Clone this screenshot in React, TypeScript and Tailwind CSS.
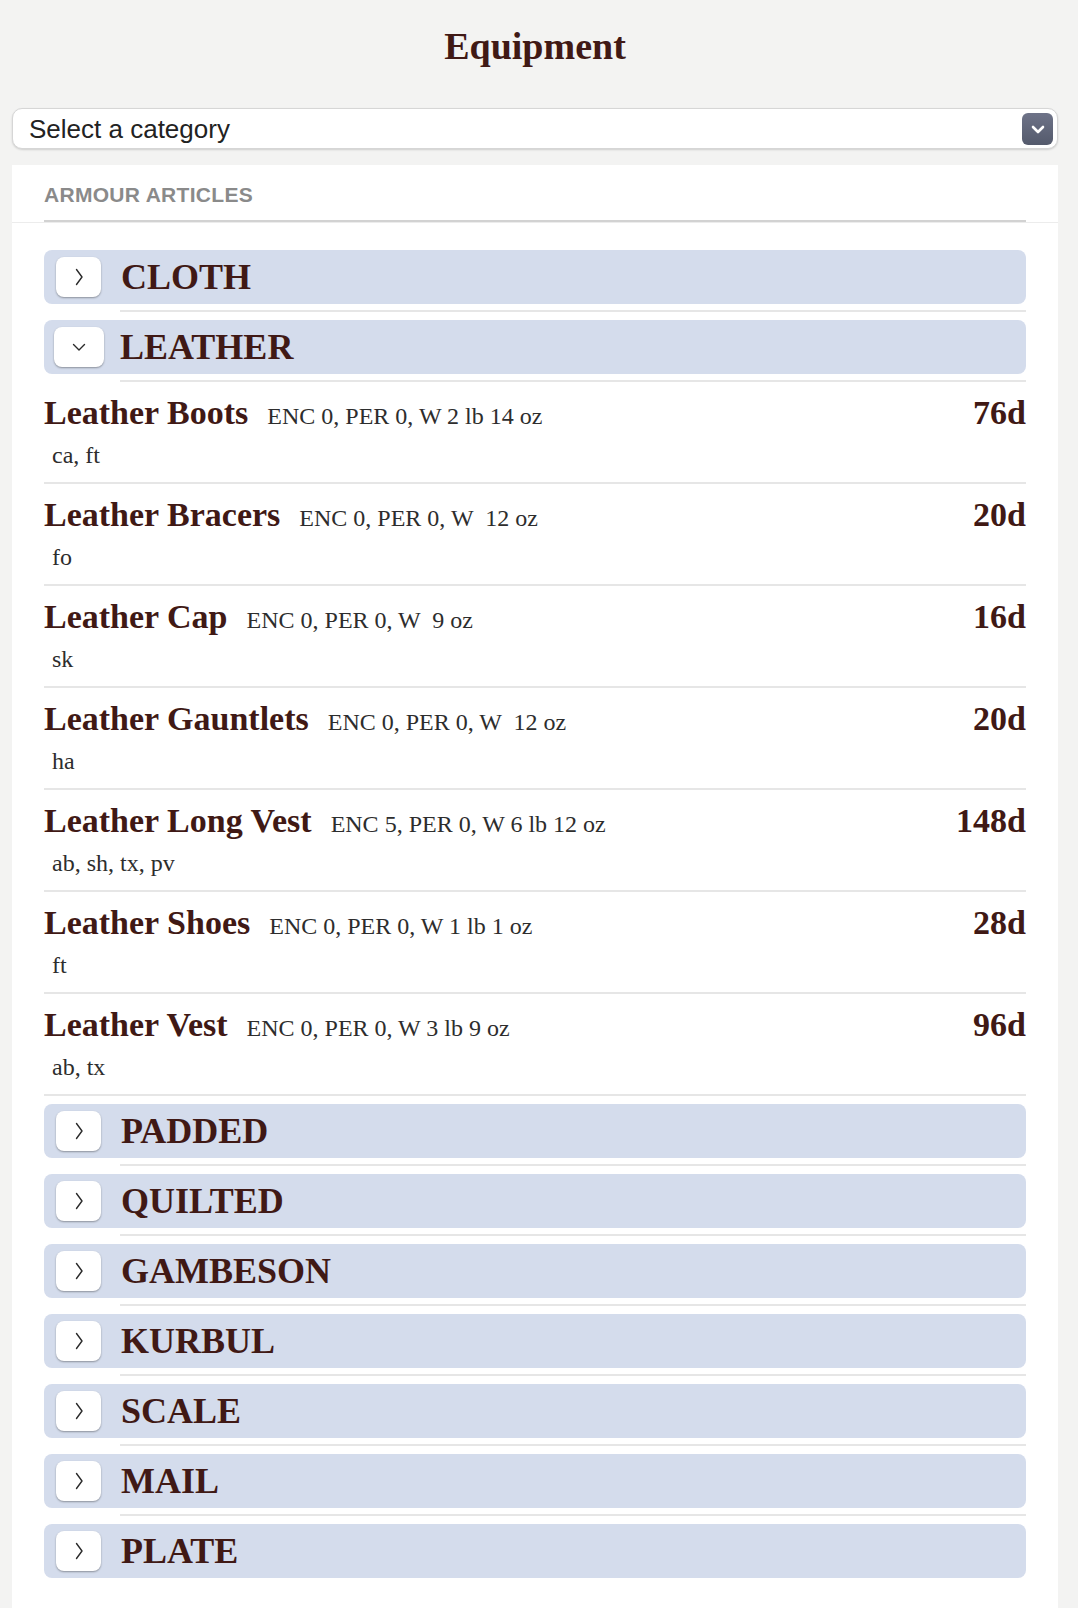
import { useState } from "react"

const serif = { fontFamily: '"Liberation Serif", "Times New Roman", serif' }
const sans = { fontFamily: '"Liberation Sans", Arial, sans-serif' }

const categories = ["CLOTH", "LEATHER", "PADDED", "QUILTED", "GAMBESON", "KURBUL", "SCALE", "MAIL", "PLATE"]

const leather = [
    { name: "Leather Boots", stats: "ENC 0, PER 0, W 2 lb 14 oz", tags: "ca, ft", price: "76d" },
    { name: "Leather Bracers", stats: "ENC 0, PER 0, W  12 oz", tags: "fo", price: "20d" },
    { name: "Leather Cap", stats: "ENC 0, PER 0, W  9 oz", tags: "sk", price: "16d" },
    { name: "Leather Gauntlets", stats: "ENC 0, PER 0, W  12 oz", tags: "ha", price: "20d" },
    { name: "Leather Long Vest", stats: "ENC 5, PER 0, W 6 lb 12 oz", tags: "ab, sh, tx, pv", price: "148d" },
    { name: "Leather Shoes", stats: "ENC 0, PER 0, W 1 lb 1 oz", tags: "ft", price: "28d" },
    { name: "Leather Vest", stats: "ENC 0, PER 0, W 3 lb 9 oz", tags: "ab, tx", price: "96d" },
]

function Chevron({ open }: { open: boolean }) {
    return (
        <svg width="20" height="20" viewBox="0 0 20 20" fill="none" stroke="#2a2a2a" strokeWidth="1.4" strokeLinecap="round" strokeLinejoin="round">
            {open ? <path d="M4.5 7.5l5.5 5.5 5.5-5.5" /> : <path d="M7.5 2.5l5.5 7.5-5.5 7.5" />}
        </svg>
    )
}

function Section({ title, open, last, onToggle }: { title: string; open: boolean; last: boolean; onToggle: () => void }) {
    return (
        <div>
            <div className="flex h-[54px] items-center rounded-[8px] bg-[#d4dcec]">
                <button
                    onClick={onToggle}
                    className={`flex h-10 items-center justify-center rounded-[8px] bg-white shadow-[0_1px_2px_rgba(0,0,0,0.35)] ${open ? "ml-[10px] w-[50px]" : "ml-3 w-[45px]"}`}
                >
                    <Chevron open={open} />
                </button>
                <span className={`${open ? "ml-4" : "ml-5"} text-[36px] font-bold leading-none text-[#401915]`} style={serif}>
                    {title}
                </span>
            </div>
            {!last && <div className={`ml-[76px] mt-[6px] h-[2px] bg-[#e6e6e6] ${open ? "" : "mb-2"}`} />}
            {open && (
                <div className="mb-2">
                    {leather.map((item) => (
                        <div key={item.name} className="border-b-2 border-[#e6e6e6] pt-[11px] pb-[11px]" style={serif}>
                            <div className="flex h-10 items-baseline">
                                <span className="text-[34px] font-bold leading-[40px] text-[#401915]">{item.name}</span>
                                <span className="ml-[19px] whitespace-pre text-[24px] leading-[40px] text-[#2d2d2d]">{item.stats}</span>
                                <span className="ml-auto text-[34px] font-bold leading-[40px] text-[#401915]">{item.price}</span>
                            </div>
                            <div className="mt-[6px] pl-2 text-[24px] leading-[32px] text-[#2d2d2d]">{item.tags}</div>
                        </div>
                    ))}
                </div>
            )}
        </div>
    )
}

export default function App() {
    const [openCat, setOpenCat] = useState("LEATHER")

    return (
        <div className="min-h-screen bg-[#f3f3f2] pl-3 pr-5">
            <h1 className="pt-[22px] text-center text-[38px] font-bold leading-[48px] text-[#401915]" style={serif}>
                Equipment
            </h1>

            <div className="mt-[38px] flex h-[41px] items-center justify-between rounded-[10px] border border-[#d6d6d6] bg-white pl-4 pr-1 shadow-[0_1px_2px_rgba(0,0,0,0.15)]">
                <span className="text-[26px] leading-none text-[#222]" style={sans}>Select a category</span>
                <div className="flex h-8 w-[31px] items-center justify-center rounded-md bg-gradient-to-b from-[#6e7388] to-[#545a6c]">
                    <svg width="18" height="18" viewBox="0 0 18 18" fill="none" stroke="white" strokeWidth="2.6" strokeLinecap="round" strokeLinejoin="round">
                        <path d="M4 7l5 5 5-5" />
                    </svg>
                </div>
            </div>

            <div className="mt-4 bg-white pb-12">
                <div className="border-b border-[#ececec]">
                    <div className="mx-8 border-b-2 border-[#d2d2d2] pt-4 pb-[11px]">
                        <span className="text-[21px] font-bold leading-[28px] tracking-[0.3px] text-[#8a8a8a]" style={sans}>ARMOUR ARTICLES</span>
                    </div>
                </div>

                <div className="px-8 pt-[27px]">
                    {categories.map((c, i) => (
                        <Section
                            key={c}
                            title={c}
                            open={openCat === c}
                            last={i === categories.length - 1}
                            onToggle={() => setOpenCat(openCat === c ? "" : c)}
                        />
                    ))}
                </div>
            </div>
        </div>
    )
}
